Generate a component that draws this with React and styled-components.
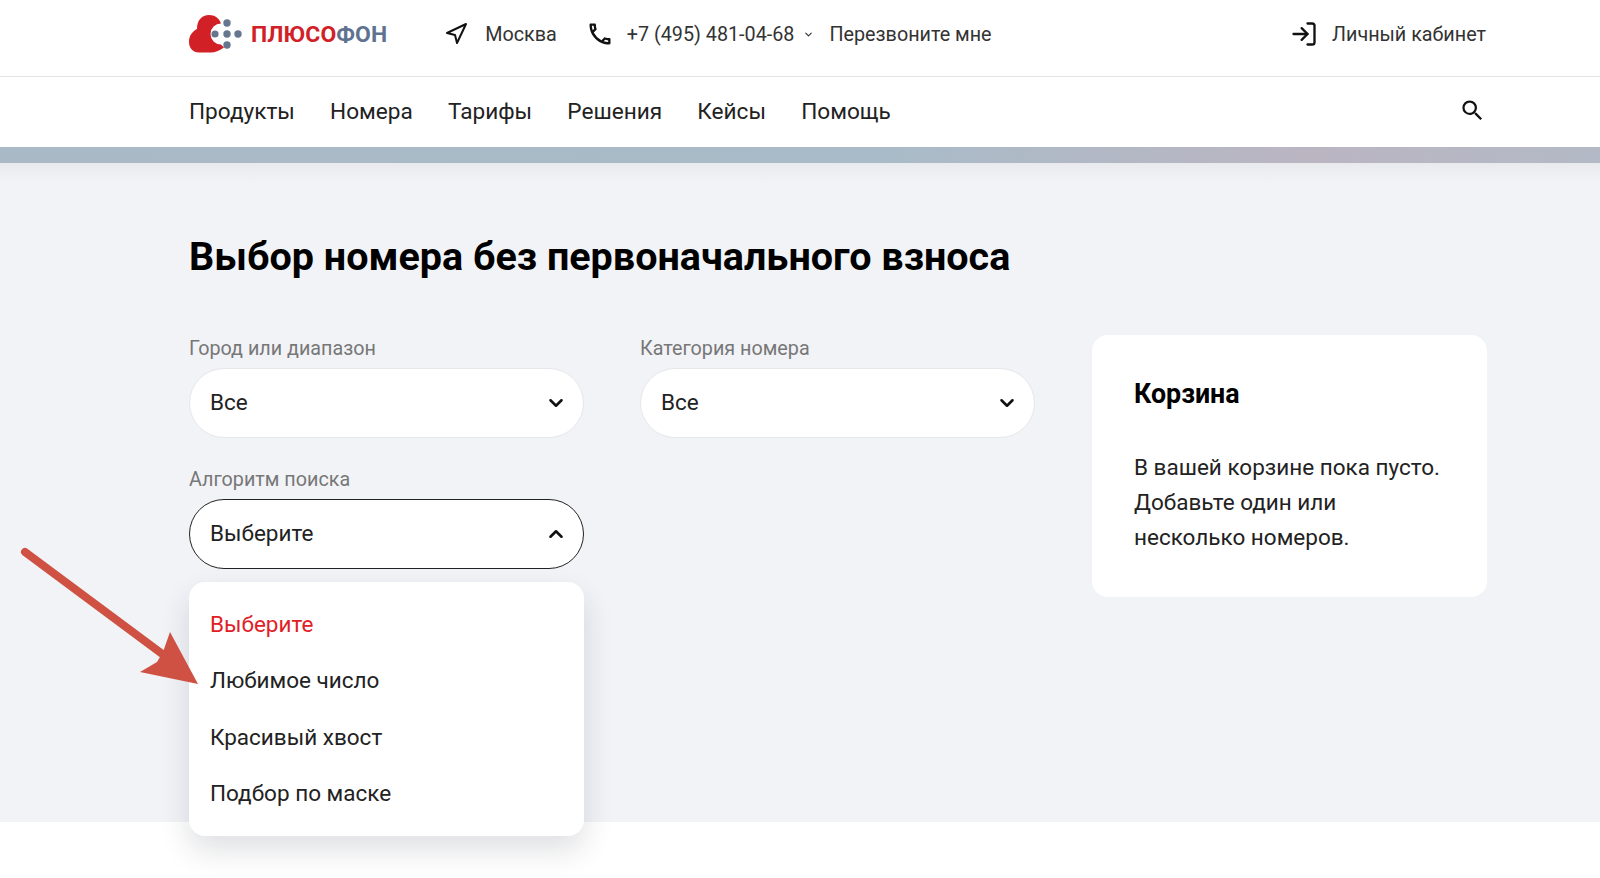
import { createGlobalStyle } from "styled-components";
import styled from "styled-components";
import { ChevronDown, ChevronUp, LogIn, Navigation } from "lucide-react";
import { MdOutlineCall, MdSearch } from "react-icons/md";

const navItems = ["Продукты", "Номера", "Тарифы", "Решения", "Кейсы", "Помощь"];
const options = ["Выберите", "Любимое число", "Красивый хвост", "Подбор по маске"];

function Logo() {
  return (
    <LogoWrap>
      <svg width="54" height="40" viewBox="0 0 54 40">
        <path d="M8 15C8 6 13 1 20 1C26 1 30 4 32 9.5A10.5 10.5 0 0 0 32 30.5L35 33.5C30 37 26 38.5 22 38.5L10 38.5C4 38.5 0 34 0 28C0 21 4 17 8 15z" fill="#d22027" />
        <circle cx="26" cy="20" r="3.6" fill="#66768f" />
        <circle cx="38" cy="9" r="3.7" fill="#66768f" />
        <circle cx="38" cy="20" r="3.7" fill="#66768f" />
        <circle cx="38" cy="31" r="3.7" fill="#66768f" />
        <circle cx="49" cy="20" r="3.7" fill="#66768f" />
      </svg>
      <LogoText>
        ПЛЮСО<span>ФОН</span>
      </LogoText>
    </LogoWrap>
  );
}

function Select({ label, value, open }) {
  return (
    <Field>
      <FieldLabel>{label}</FieldLabel>
      <SelectBox $open={open}>
        <span>{value}</span>
        {open ? <ChevronUp size={22} strokeWidth={2.8} color="#111" /> : <ChevronDown size={22} strokeWidth={2.8} color="#111" />}
      </SelectBox>
      {open && (
        <Menu>
          {options.map((o, i) => (
            <MenuItem key={o} $active={i === 0}>{o}</MenuItem>
          ))}
        </Menu>
      )}
    </Field>
  );
}

export default function App() {
  return (
    <Page>
      <GlobalStyle />
      <TopBar>
        <Container>
          <TopLeft>
            <Logo />
            <TopLink $gap={17} $ml={57}>
              <Navigation size={24} strokeWidth={2} color="#111" />
              Москва
            </TopLink>
            <TopLink $gap={13} $ml={29}>
              <MdOutlineCall size={28} color="#111" />
              +7 (495) 481-04-68
            </TopLink>
            <SmallChevron><ChevronDown size={11} strokeWidth={2.5} /></SmallChevron>
            <TopLink $ml={15}>Перезвоните мне</TopLink>
          </TopLeft>
          <AccountLink $gap={14}>
            <LogIn size={28} strokeWidth={2} color="#111" />
            Личный кабинет
          </AccountLink>
        </Container>
      </TopBar>
      <NavBar>
        <Container>
          <NavList>
            {navItems.map((n) => (
              <NavItem key={n}>{n}</NavItem>
            ))}
          </NavList>
          <SearchIcon><MdSearch size={27} color="#111" /></SearchIcon>
        </Container>
      </NavBar>
      <Band />
      <Main>
        <Content>
          <Title>Выбор номера без первоначального взноса</Title>
          <FormRow>
            <Fields>
              <Select label="Город или диапазон" value="Все" />
              <Select label="Категория номера" value="Все" />
              <Select label="Алгоритм поиска" value="Выберите" open />
            </Fields>
            <Cart>
              <CartTitle>Корзина</CartTitle>
              <CartText>
                В вашей корзине пока пусто.
                <br />
                Добавьте один или
                <br />
                несколько номеров.
              </CartText>
            </Cart>
          </FormRow>
        </Content>
      </Main>
      <Footer />
      <Arrow width="210" height="150" viewBox="0 0 210 150">
        <path d="M10 8L150 112" stroke="#cf5143" strokeWidth="8" strokeLinecap="round" />
        <path d="M155 88L183 140L125 128L142 118L148 108z" fill="#cf5143" />
      </Arrow>
    </Page>
  );
}

const GlobalStyle = createGlobalStyle`
  html, body {
    margin: 0;
    padding: 0;
    background: #fff;
  }
  body {
    font-family: Roboto, "Liberation Sans", sans-serif;
    color: #222;
  }
  * {
    box-sizing: border-box;
  }
`;
const Page = styled.div`
  position: relative;
  height: 878px;
  overflow: hidden;
  display: flex;
  flex-direction: column;
`;
const Container = styled.div`
  width: 1298px;
  margin-left: 189px;
  display: flex;
  align-items: center;
  justify-content: space-between;
`;
const TopBar = styled.header`
  height: 77px;
  padding-bottom: 8px;
  display: flex;
  border-bottom: 1px solid #e3e4e7;
`;
const TopLeft = styled.div`
  display: flex;
  align-items: center;
`;
const LogoWrap = styled.div`
  display: flex;
  align-items: center;
  gap: 8px;
`;
const LogoText = styled.div`
  font-size: 22.9px;
  font-weight: 700;
  letter-spacing: 0.1px;
  color: #d22027;
  span {
    color: #5f7390;
  }
`;
const TopLink = styled.div`
  display: flex;
  align-items: center;
  gap: ${(p) => p.$gap || 0}px;
  margin-left: ${(p) => p.$ml || 0}px;
  font-size: 19.75px;
  color: #333;
`;
const AccountLink = styled(TopLink)`
  margin-right: 1px;
`;
const SmallChevron = styled.span`
  display: flex;
  margin-left: 9px;
  color: #333;
`;
const NavBar = styled.nav`
  height: 70px;
  padding-bottom: 2px;
  display: flex;
`;
const NavList = styled.div`
  display: flex;
  gap: 35.2px;
`;
const NavItem = styled.div`
  font-size: 22.6px;
  color: #222;
`;
const SearchIcon = styled.span`
  display: flex;
  margin: 0 1px 1px 0;
`;
const Band = styled.div`
  height: 16px;
  background: linear-gradient(90deg, #aab9c6 0%, #a9bbc8 55%, #bbb5c2 82%, #b3b9c6 100%);
`;
const Main = styled.main`
  height: 659px;
  background: linear-gradient(180deg, #e9eaee 0, #f2f3f7 20px);
`;
const Content = styled.div`
  width: 1298px;
  margin-left: 189px;
  padding-top: 68px;
`;
const Title = styled.h1`
  margin: 0;
  font-size: 39.5px;
  line-height: 52px;
  font-weight: 700;
  color: #000;
`;
const FormRow = styled.div`
  display: grid;
  grid-template-columns: 1fr 395px;
  column-gap: 57px;
  margin-top: 52px;
`;
const Fields = styled.div`
  display: grid;
  grid-template-columns: 395px 395px;
  column-gap: 56px;
  row-gap: 30.5px;
  align-content: start;
  padding-top: 2px;
`;
const Field = styled.div`
  position: relative;
`;
const FieldLabel = styled.div`
  font-size: 19.75px;
  line-height: 24px;
  margin-bottom: 6.5px;
  color: #777;
`;
const SelectBox = styled.div`
  height: 70px;
  padding: 0 16px 1px 20px;
  display: flex;
  align-items: center;
  justify-content: space-between;
  background: #fff;
  border: 1px solid ${(p) => (p.$open ? "#222" : "#e6e7eb")};
  border-radius: 35px;
  font-size: 22.5px;
  color: #222;
  svg {
    margin-top: 1px;
  }
`;
const Menu = styled.div`
  position: absolute;
  top: 114px;
  left: 0;
  width: 100%;
  height: 254px;
  padding: 13.5px 0;
  background: #fff;
  border-radius: 16px;
  box-shadow: 0 14px 30px rgba(30, 35, 50, 0.14);
`;
const MenuItem = styled.div`
  height: 56.5px;
  padding: 0 21px;
  display: flex;
  align-items: center;
  font-size: 22.5px;
  color: ${(p) => (p.$active ? "#df2127" : "#222")};
`;
const Cart = styled.aside`
  height: 262px;
  padding: 41px 42px;
  background: #fff;
  border-radius: 16px;
`;
const CartTitle = styled.h2`
  margin: 0 0 38px;
  font-size: 26.8px;
  line-height: 36px;
  font-weight: 700;
  color: #000;
`;
const CartText = styled.p`
  margin: 0;
  font-size: 22.5px;
  line-height: 35.2px;
  color: #222;
`;
const Footer = styled.footer`
  flex: 1;
  background: #fff;
`;
const Arrow = styled.svg`
  position: absolute;
  left: 15px;
  top: 544px;
`;
